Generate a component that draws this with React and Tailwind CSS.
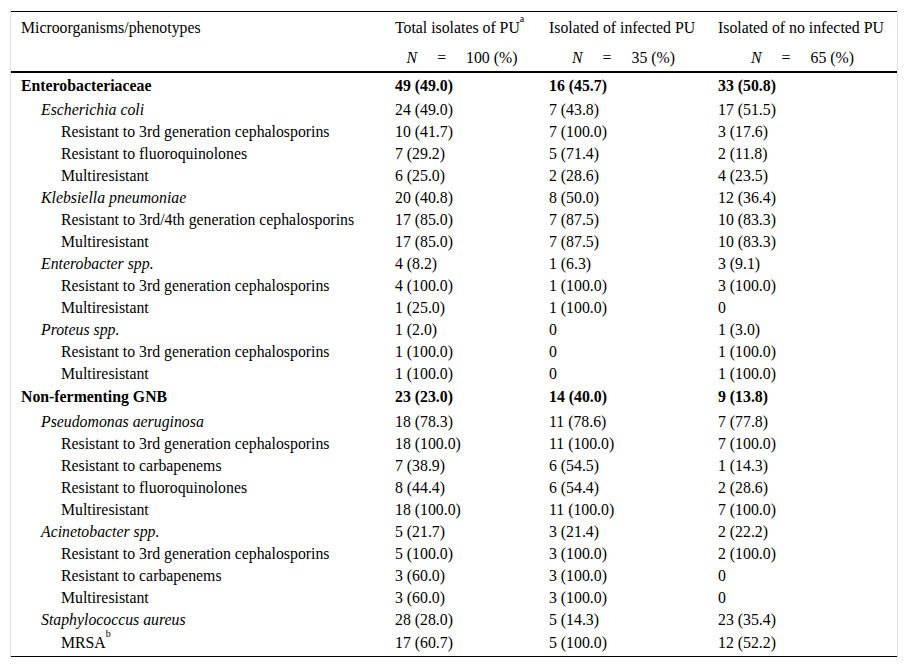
const rows = [
  { type: "group", label: "Enterobacteriaceae", v: ["49 (49.0)", "16 (45.7)", "33 (50.8)"], h: "h-[26px] pt-[1px]" },
  { type: "org", label: "Escherichia coli", v: ["24 (49.0)", "7 (43.8)", "17 (51.5)"] },
  { type: "pheno", label: "Resistant to 3rd generation cephalosporins", v: ["10 (41.7)", "7 (100.0)", "3 (17.6)"] },
  { type: "pheno", label: "Resistant to fluoroquinolones", v: ["7 (29.2)", "5 (71.4)", "2 (11.8)"] },
  { type: "pheno", label: "Multiresistant", v: ["6 (25.0)", "2 (28.6)", "4 (23.5)"] },
  { type: "org", label: "Klebsiella pneumoniae", v: ["20 (40.8)", "8 (50.0)", "12 (36.4)"] },
  { type: "pheno", label: "Resistant to 3rd/4th generation cephalosporins", v: ["17 (85.0)", "7 (87.5)", "10 (83.3)"] },
  { type: "pheno", label: "Multiresistant", v: ["17 (85.0)", "7 (87.5)", "10 (83.3)"] },
  { type: "org", label: "Enterobacter spp.", v: ["4 (8.2)", "1 (6.3)", "3 (9.1)"] },
  { type: "pheno", label: "Resistant to 3rd generation cephalosporins", v: ["4 (100.0)", "1 (100.0)", "3 (100.0)"] },
  { type: "pheno", label: "Multiresistant", v: ["1 (25.0)", "1 (100.0)", "0"] },
  { type: "org", label: "Proteus spp.", v: ["1 (2.0)", "0", "1 (3.0)"] },
  { type: "pheno", label: "Resistant to 3rd generation cephalosporins", v: ["1 (100.0)", "0", "1 (100.0)"] },
  { type: "pheno", label: "Multiresistant", v: ["1 (100.0)", "0", "1 (100.0)"] },
  { type: "group", label: "Non-fermenting GNB", v: ["23 (23.0)", "14 (40.0)", "9 (13.8)"], h: "h-[26px]" },
  { type: "org", label: "Pseudomonas aeruginosa", v: ["18 (78.3)", "11 (78.6)", "7 (77.8)"] },
  { type: "pheno", label: "Resistant to 3rd generation cephalosporins", v: ["18 (100.0)", "11 (100.0)", "7 (100.0)"] },
  { type: "pheno", label: "Resistant to carbapenems", v: ["7 (38.9)", "6 (54.5)", "1 (14.3)"] },
  { type: "pheno", label: "Resistant to fluoroquinolones", v: ["8 (44.4)", "6 (54.4)", "2 (28.6)"] },
  { type: "pheno", label: "Multiresistant", v: ["18 (100.0)", "11 (100.0)", "7 (100.0)"] },
  { type: "org", label: "Acinetobacter spp.", v: ["5 (21.7)", "3 (21.4)", "2 (22.2)"] },
  { type: "pheno", label: "Resistant to 3rd generation cephalosporins", v: ["5 (100.0)", "3 (100.0)", "2 (100.0)"] },
  { type: "pheno", label: "Resistant to carbapenems", v: ["3 (60.0)", "3 (100.0)", "0"] },
  { type: "pheno", label: "Multiresistant", v: ["3 (60.0)", "3 (100.0)", "0"] },
  { type: "org", label: "Staphylococcus aureus", v: ["28 (28.0)", "5 (14.3)", "23 (35.4)"] },
  { type: "pheno", label: "MRSA", sup: "b", v: ["17 (60.7)", "5 (100.0)", "12 (52.2)"] },
];

function NCell({ n }) {
  return (
    <td className="h-[30px] px-[10px] pt-[3px] align-middle text-center">
      <span className="italic">N</span>
      <span className="mx-[20px]">=</span>
      <span>{n} (%)</span>
    </td>
  );
}

export default function App() {
  return (
    <div className="min-h-[669px] bg-white text-black font-['Liberation_Serif','Times_New_Roman',serif]">
      <div className="ml-[10px] mt-[9px] w-[888px] border-x border-[#e2e2e2] pt-[2px] pb-[1px] text-[15.8px] leading-[17px]">
        <table className="w-[886px] border-collapse border-b border-black table-fixed">
          <colgroup>
            <col className="w-[374px]" />
            <col className="w-[154px]" />
            <col className="w-[169px]" />
            <col className="w-[189px]" />
          </colgroup>
          <thead>
            <tr className="border-t border-black">
              <td className="h-[30px] pl-[10px] pt-[2px] align-middle">Microorganisms/phenotypes</td>
              <td className="h-[30px] pl-[10px] pt-[2px] align-middle">
                Total isolates of PU<sup className="text-[10px] align-[6px]">a</sup>
              </td>
              <td className="h-[30px] pl-[10px] pt-[2px] align-middle">Isolated of infected PU</td>
              <td className="h-[30px] pl-[10px] pt-[2px] align-middle">Isolated of no infected PU</td>
            </tr>
            <tr className="border-b-2 border-black">
              <td className="h-[30px]"></td>
              <NCell n="100" />
              <NCell n="35" />
              <NCell n="65" />
            </tr>
          </thead>
          <tbody>
            {rows.map((r, i) => {
              const h = r.h || "h-[22px] pt-[1px]";
              const last = i === rows.length - 1;
              const labelCls =
                r.type === "group"
                  ? "pl-[10px] font-bold"
                  : r.type === "org"
                  ? "pl-[30px] italic"
                  : "pl-[50px]";
              return (
                <tr key={i} className={last ? "h-[27px]" : ""}>
                  <td className={`${h} align-middle ${labelCls} ${last ? "align-top pt-[4px]" : ""}`}>
                    {r.label}
                    {r.sup && <sup className="text-[10px] align-[6px]">{r.sup}</sup>}
                  </td>
                  {r.v.map((v, j) => (
                    <td
                      key={j}
                      className={`${h} pl-[10px] align-middle ${r.type === "group" ? "font-bold" : ""} ${last ? "align-top pt-[4px]" : ""}`}
                    >
                      {v}
                    </td>
                  ))}
                </tr>
              );
            })}
          </tbody>
        </table>
      </div>
    </div>
  );
}
